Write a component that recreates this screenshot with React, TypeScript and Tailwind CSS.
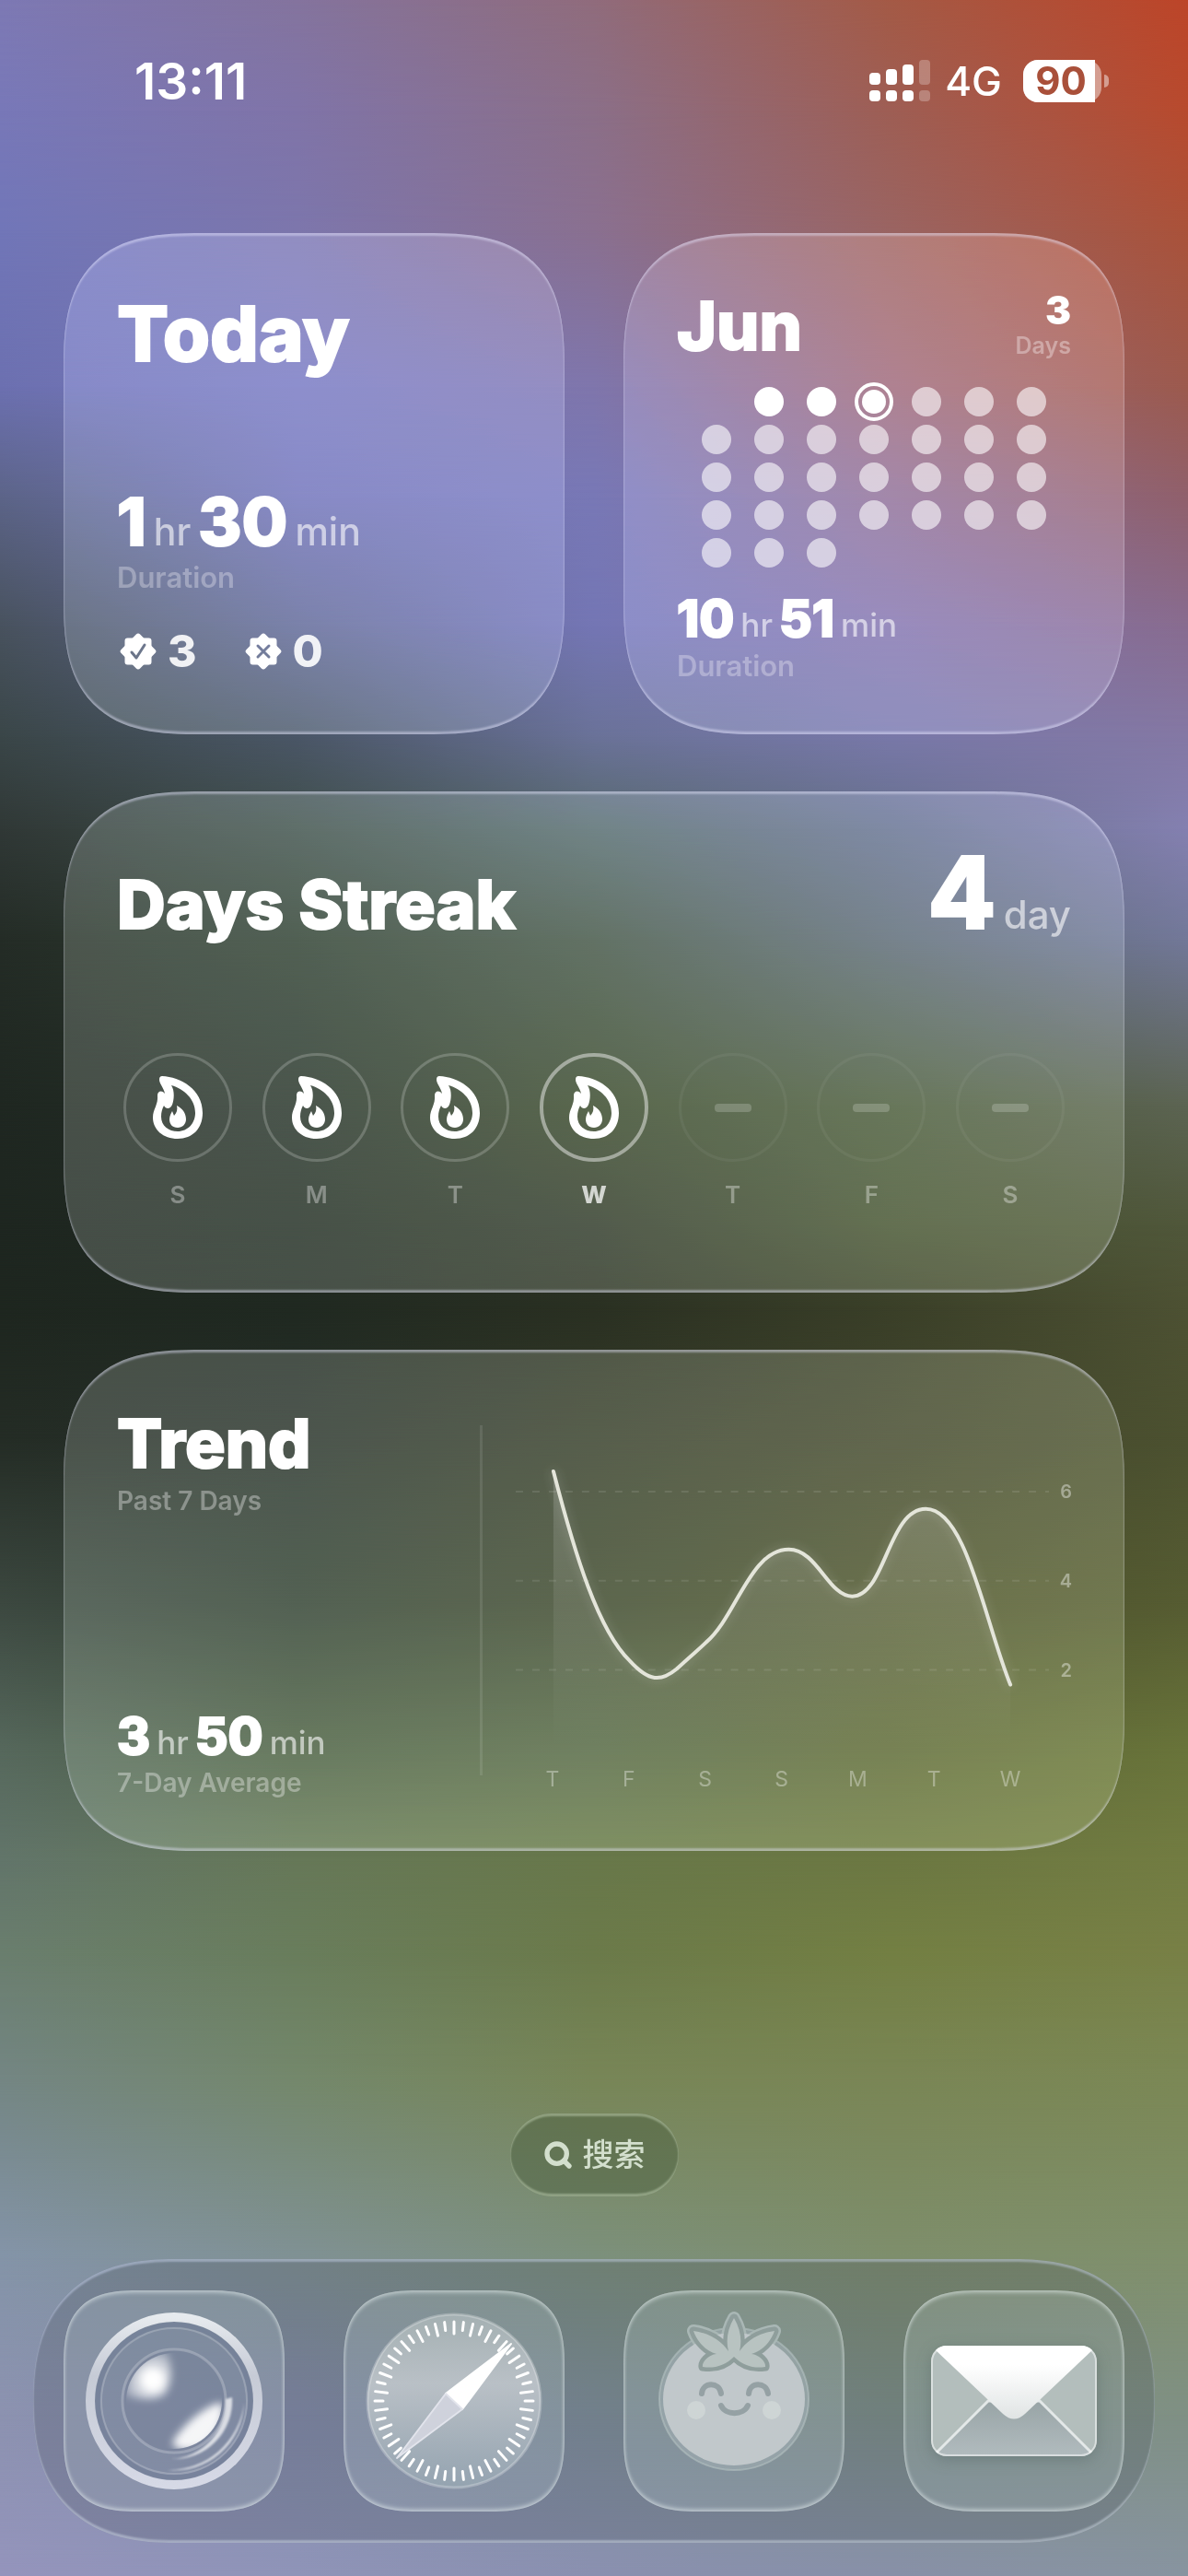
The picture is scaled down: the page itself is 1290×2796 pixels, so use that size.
import { useId, type ReactNode } from "react";
import { Search } from "lucide-react";

// Wallpaper colours: one row per height, five stops from left to right.
const wallpaper: { at: number; colors: string[] }[] = [
  { at: 0, colors: ["#7d79b4", "#84749e", "#906c7c", "#a45a46", "#bd4529"] },
  { at: 120, colors: ["#7878b8", "#8074a8", "#8b6f88", "#9e5e54", "#b84a2e"] },
  { at: 250, colors: ["#7176b8", "#7c76ac", "#8a7090", "#9a6462", "#aa523a"] },
  { at: 420, colors: ["#6c70b0", "#7778b8", "#7f76ac", "#98697a", "#9c5a4e"] },
  { at: 540, colors: ["#5c6488", "#7072b0", "#7878b6", "#8c7094", "#90606c"] },
  { at: 680, colors: ["#48525e", "#606690", "#7476b4", "#8274a8", "#886c90"] },
  { at: 800, colors: ["#3a4648", "#4a5666", "#6a7298", "#7878a8", "#8478a4"] },
  { at: 900, colors: ["#303836", "#3f4e4a", "#56686c", "#66708c", "#8480b0"] },
  { at: 1020, colors: ["#242c26", "#2e3c30", "#435246", "#5c6872", "#727898"] },
  { at: 1200, colors: ["#1f2721", "#252f27", "#38452c", "#4a583c", "#5c6452"] },
  { at: 1330, colors: ["#1e2620", "#202a21", "#2e3628", "#445032", "#50573a"] },
  { at: 1420, colors: ["#1e261f", "#202921", "#2a3022", "#3a3f28", "#4d5133"] },
  { at: 1560, colors: ["#242c25", "#262f28", "#343a28", "#40442c", "#4c5130"] },
  { at: 1740, colors: ["#3c4840", "#303d30", "#3b442c", "#4a502c", "#565c32"] },
  { at: 1900, colors: ["#56685c", "#4a5c42", "#546444", "#5c6638", "#69743a"] },
  { at: 2020, colors: ["#62756a", "#667858", "#68784a", "#6c7842", "#727c42"] },
  { at: 2120, colors: ["#6a7e6e", "#697d5c", "#6b7a4a", "#737f43", "#788046"] },
  { at: 2260, colors: ["#748684", "#74886c", "#788658", "#7a8656", "#7b8856"] },
  { at: 2450, colors: ["#8494a8", "#809194", "#7c907c", "#7e8e6c", "#80906c"] },
  { at: 2620, colors: ["#8c92b0", "#848cac", "#80909c", "#7e9088", "#7f9084"] },
  { at: 2796, colors: ["#9494bc", "#8f94b8", "#8a90b0", "#8890a8", "#8894a0"] },
];

const wallpaperHeight = 2796;

const glass =
  "bg-[#f4faf6]/19 backdrop-saturate-120 rounded-[100px] supports-[corner-shape:squircle]:rounded-[150px] [corner-shape:superellipse(1.5)] shadow-[inset_0_3px_2px_rgba(230,230,255,0.42),inset_0_-3px_2px_rgba(230,230,255,0.42),inset_0_0_2px_rgba(255,255,255,0.12)]";

const heading = "font-extrabold [-webkit-text-stroke:2px_white]";

const weekdays = [
  { label: "S", state: "done" },
  { label: "M", state: "done" },
  { label: "T", state: "done" },
  { label: "W", state: "today" },
  { label: "T", state: "next" },
  { label: "F", state: "next" },
  { label: "S", state: "next" },
];

const trendDays = ["T", "F", "S", "S", "M", "T", "W"];
const trendLevels = [6, 4, 2];

const trendLine =
  "M41 50 C65 143 90 223 124 256 C145 279 158 279 175 265 C190 251 200 243 207 236 C240 208 255 135 297 135 C328 135 340 186 366 186 C402 186 405 91 446 91 C490 91 510 213 538 282";

function Wallpaper() {
  return (
    <div aria-hidden className="absolute inset-0 -z-10 overflow-hidden">
      {wallpaper.map((row, i) => {
        const from = i === 0 ? 0 : (wallpaper[i - 1].at / wallpaperHeight) * 100;
        const to = (row.at / wallpaperHeight) * 100;
        const mask = i === 0 ? undefined : `linear-gradient(to bottom, transparent ${from}%, black ${to}%)`;
        return (
          <div
            key={row.at}
            className="absolute inset-0"
            style={{ backgroundImage: `linear-gradient(to right, ${row.colors.join(", ")})`, maskImage: mask }}
          />
        );
      })}
    </div>
  );
}

function StatusBar() {
  const bars = [13, 17, 22, 27];
  return (
    <header className="flex h-[152px] items-center justify-between pt-6 pr-[86px] pl-[146px]">
      <time className="text-[55px] leading-none font-semibold">13:11</time>
      <div className="flex items-center gap-[23px]">
        <div className="flex items-center gap-4">
          <svg viewBox="0 0 66 46" className="h-[46px] w-[66px]" fill="white" aria-label="Signal">
            {bars.map((h, i) => (
              <g key={h} opacity={i === 3 ? 0.25 : 1}>
                <rect x={i * 18} y={27 - h} width="12" height={h} rx="4" />
                <rect x={i * 18} y="33" width="12" height="12" rx="4" />
              </g>
            ))}
          </svg>
          <span className="text-[44px] leading-[56px] font-medium">4G</span>
        </div>
        <div className="flex items-center gap-[3px]">
          <div className="flex w-[85px] rounded-2xl bg-white/45">
            <div className="w-[78px] rounded-l-2xl bg-white pl-1 text-center text-[42px] leading-[46px] font-bold text-[#a9503a]">
              90
            </div>
          </div>
          <div className="h-[14px] w-[5px] rounded-r-full bg-white/45" />
        </div>
      </div>
    </header>
  );
}

function Duration({ hours, minutes, large = false }: { hours: number; minutes: number; large?: boolean }) {
  const value = large
    ? "text-[72px] leading-[72px] font-extrabold [-webkit-text-stroke:2px_white]"
    : "text-[55px] leading-[54px] font-extrabold [-webkit-text-stroke:2px_white]";
  const unit = large ? "text-[41px] font-medium text-white/60" : "text-[35px] font-medium text-white/60";
  return (
    <p className={large ? "flex items-baseline gap-2" : "flex items-baseline gap-[7px]"}>
      <span className={value}>{hours}</span>
      <span className={unit}>hr</span>
      <span className={value}>{minutes}</span>
      <span className={unit}>min</span>
    </p>
  );
}

function Badge({ children }: { children: ReactNode }) {
  const id = useId();
  return (
    <svg viewBox="0 0 40 40" className="size-10">
      <mask id={id}>
        <g fill="white" stroke="white" strokeWidth="6" strokeLinejoin="round">
          <rect x="8.500" y="8.500" width="23" height="23" />
          <rect x="8.500" y="8.500" width="23" height="23" transform="rotate(45 20 20)" />
        </g>
        <g fill="none" stroke="black" strokeWidth="3" strokeLinecap="round" strokeLinejoin="round">
          {children}
        </g>
      </mask>
      <rect width="40" height="40" fill="white" mask={`url(#${id})`} />
    </svg>
  );
}

function TodayCard() {
  return (
    <section className={`${glass} flex aspect-square flex-col px-[58px] pt-[68px] pb-[66px]`}>
      <h2 className={`${heading} text-[83px] leading-[82px]`}>Today</h2>
      <div className="mt-auto">
        <Duration hours={1} minutes={30} large />
        <p className="mt-[3px] text-[31px] leading-8 font-semibold text-white/30">Duration</p>
        <div className="mt-10 flex items-center gap-[52px] pl-[3px] text-[48px] leading-[48px] font-extrabold text-white/90">
          <span className="flex items-center gap-3">
            <Badge>
              <path d="M13 21l5 6 9-14" />
            </Badge>
            3
          </span>
          <span className="flex items-center gap-3">
            <Badge>
              <path d="M14 14l12 12M26 14l-12 12" />
            </Badge>
            0
          </span>
        </div>
      </div>
    </section>
  );
}

function MonthCard() {
  const days = Array.from({ length: 30 }, (_, i) => i + 1);
  return (
    <section className={`${glass} flex aspect-square flex-col px-[58px] pt-16 pb-[58px]`}>
      <div className="flex items-start justify-between">
        <h2 className={`${heading} text-[73px] leading-[74px]`}>Jun</h2>
        <div className="text-right">
          <p className="text-[42px] leading-10 font-black">3</p>
          <p className="text-[25px] leading-9 font-semibold text-white/35">Days</p>
        </div>
      </div>
      <div className="mx-auto mt-[26px] grid grid-cols-7 gap-x-6 gap-y-2">
        {days.map((day) => (
          <span
            key={day}
            className={
              day === 1
                ? "col-start-2 flex size-[33px] items-center justify-center"
                : "flex size-[33px] items-center justify-center"
            }
          >
            {day === 3 ? (
              <span className="-m-1 flex size-[42px] shrink-0 items-center justify-center rounded-full border-4 border-white">
                <span className="size-[26px] rounded-full bg-white" />
              </span>
            ) : (
              <span className={day < 3 ? "size-8 rounded-full bg-white" : "size-8 rounded-full bg-white/60"} />
            )}
          </span>
        ))}
      </div>
      <div className="mt-auto">
        <Duration hours={10} minutes={51} />
        <p className="mt-[3px] text-[31px] leading-8 font-semibold text-white/30">Duration</p>
      </div>
    </section>
  );
}

function Flame() {
  return (
    <svg viewBox="0 0 54 68" className="h-[68px] w-[54px]" fill="white">
      <path
        fillRule="evenodd"
        d="M10 0 C30 1 54 14 54 40 C54 57 43 68 27 68 C11 68 0 58 0 45 C0 36 6 31 5 21 C5 16 10 15 13 19 C12 13 7 8 7 4 C7 1 8 0 10 0 Z M20 10 C24 16 23 26 21 31 C19 36 14 36 12 32 C10 36 9 39 9 44 C9 54 17 60 27 60 C38 60 46 51 46 40 C46 25 34 14 20 10 Z"
      />
      <path d="M26 32 C32 35 36 40 36 47 C36 52 32 56 27 56 C21 56 18 52 18 47 C18 43 20 40 21 38 L23 43 C26 40 27 36 26 32 Z" />
    </svg>
  );
}

function StreakCard() {
  return (
    <section className={`${glass} flex aspect-[1152/544] flex-col px-[58px] pt-14`}>
      <div className="flex items-baseline justify-between">
        <h2 className={`${heading} text-[73px] leading-[108px]`}>Days Streak</h2>
        <p className="flex items-baseline gap-2">
          <span className={`${heading} text-[108px] leading-[108px]`}>4</span>
          <span className="text-[42px] font-medium text-white/60">day</span>
        </p>
      </div>
      <ol className="mx-[7px] mt-[107px] flex justify-between">
        {weekdays.map((day, i) => (
          <li key={i} className="flex flex-col items-center gap-5">
            <span
              className={
                day.state === "today"
                  ? "flex size-[118px] items-center justify-center rounded-full border-4 border-white/45"
                  : day.state === "done"
                    ? "flex size-[118px] items-center justify-center rounded-full border-3 border-white/20"
                    : "flex size-[118px] items-center justify-center rounded-full border-3 border-white/5"
              }
            >
              {day.state === "next" ? <span className="h-[9px] w-10 rounded-sm bg-white/20" /> : <Flame />}
            </span>
            <span
              className={
                day.state === "today"
                  ? "text-[26px] leading-8 font-extrabold text-white/75"
                  : "text-[26px] leading-8 font-semibold text-white/35"
              }
            >
              {day.label}
            </span>
          </li>
        ))}
      </ol>
    </section>
  );
}

function TrendChart() {
  const id = useId();
  return (
    <div className="flex-1 pt-4 pl-9">
      <svg viewBox="0 0 604 400" className="w-full overflow-visible" role="img" aria-label="Hours per day, past 7 days">
        <defs>
          <linearGradient id={id} x1="0" x2="0" y1="0" y2="1">
            <stop offset="0" stopColor="white" stopOpacity="0.16" />
            <stop offset="1" stopColor="white" stopOpacity="0" />
          </linearGradient>
        </defs>
        {trendLevels.map((level, i) => (
          <g key={level}>
            <path d={`M0 ${72 + i * 97}H580`} stroke="white" strokeOpacity="0.1" strokeWidth="2" strokeDasharray="8 10" />
            <text x="605" y={79 + i * 97} textAnchor="end" fill="white" fillOpacity="0.4" fontSize="20" fontWeight="600">
              {level}
            </text>
          </g>
        ))}
        <path d={`${trendLine} V350 H41 Z`} fill={`url(#${id})`} />
        <path
          d={trendLine}
          fill="none"
          stroke="#e4e5da"
          strokeWidth="4"
          strokeLinecap="round"
          className="drop-shadow-[0_0_6px_rgba(255,255,255,0.25)]"
        />
        {trendDays.map((day, i) => (
          <text key={i} x={40 + i * 83} y="393" textAnchor="middle" fill="white" fillOpacity="0.35" fontSize="23">
            {day}
          </text>
        ))}
      </svg>
    </div>
  );
}

function TrendCard() {
  return (
    <section className={`${glass} flex aspect-[1152/544] px-[58px] pt-[66px] pb-[58px]`}>
      <div className="flex w-[394px] flex-col">
        <h2 className={`${heading} text-[73px] leading-[72px]`}>Trend</h2>
        <p className="mt-2 text-[28px] leading-9 font-semibold text-white/35">Past 7 Days</p>
        <div className="mt-auto">
          <Duration hours={3} minutes={50} />
          <p className="mt-[2px] text-[28px] leading-8 font-semibold text-white/35">7-Day Average</p>
        </div>
      </div>
      <div className="mt-4 mb-6 w-[3px] bg-white/10" />
      <TrendChart />
    </section>
  );
}

function CameraIcon() {
  const id = useId();
  return (
    <svg viewBox="0 0 240 240" className="w-full" aria-label="Camera">
      <defs>
        <radialGradient id={`${id}a`} cx="0.6" cy="0.6" r="0.6">
          <stop offset="0.2" stopColor="white" />
          <stop offset="1" stopColor="white" stopOpacity="0.3" />
        </radialGradient>
        <linearGradient id={`${id}r`} x1="0" x2="0" y1="0" y2="1">
          <stop offset="0" stopColor="#e6eaee" />
          <stop offset="0.35" stopColor="#c6cbd6" />
          <stop offset="1" stopColor="#d6d9e6" />
        </linearGradient>
        <clipPath id={`${id}c`}>
          <circle cx="120" cy="120" r="52" />
        </clipPath>
        <filter id={`${id}b`} x="-30%" y="-30%" width="160%" height="160%">
          <feGaussianBlur stdDeviation="4" />
        </filter>
        <filter id={`${id}s`}>
          <feGaussianBlur stdDeviation="1" />
        </filter>
      </defs>
      <circle cx="120" cy="120" r="86" fill="#76829c" fillOpacity="0.4" />
      <circle cx="120" cy="120" r="83" fill="none" stroke="#6a7690" strokeOpacity="0.4" strokeWidth="5" />
      <circle cx="120" cy="120" r="79" fill="none" stroke="white" strokeOpacity="0.2" strokeWidth="2" />
      <circle cx="120" cy="120" r="91" fill="none" stroke={`url(#${id}r)`} strokeWidth="10" />
      <circle cx="120" cy="120" r="56" fill="#6f7c94" fillOpacity="0.3" stroke="white" strokeOpacity="0.22" strokeWidth="3" />
      <g clipPath={`url(#${id}c)`}>
        <path
          d="M66 114 C66 88 88 66 112 66 C119 82 119 100 110 113 C98 121 80 118 66 114 Z"
          fill={`url(#${id}a)`}
          filter={`url(#${id}b)`}
        />
        <path
          d="M172 122 C158 122 128 146 118 166 C124 176 144 176 158 166 C170 154 176 136 172 122 Z"
          fill="white"
          fillOpacity="0.92"
          filter={`url(#${id}b)`}
        />
      </g>
      <circle cx="97" cy="97" r="9" fill="white" filter={`url(#${id}b)`} />
      <path d="M183 116 A63 63 0 0 1 117 183 A62 62 0 0 0 176 118 Z" fill="white" fillOpacity="0.7" filter={`url(#${id}s)`} />
      <path d="M196 122 A76 76 0 0 1 112 195 A82 82 0 0 0 196 122 Z" fill="white" fillOpacity="0.75" filter={`url(#${id}s)`} />
    </svg>
  );
}

function CompassIcon() {
  const id = useId();
  const ticks = Array.from({ length: 52 }, (_, i) => i);
  return (
    <svg viewBox="0 0 240 240" className="w-full" aria-label="Browser">
      <defs>
        <linearGradient id={id} x1="0" x2="0" y1="0" y2="1">
          <stop offset="0" stopColor="#a4b0b2" />
          <stop offset="0.4" stopColor="#b9c0c6" />
          <stop offset="1" stopColor="#94a3b0" />
        </linearGradient>
      </defs>
      <circle cx="120" cy="120" r="94" fill={`url(#${id})`} stroke="white" strokeOpacity="0.25" strokeWidth="3" />
      <g stroke="white" strokeWidth="3" strokeLinecap="round">
        {ticks.map((i) => (
          <path key={i} d={i % 2 ? "M120 34v9" : "M120 34v13"} transform={`rotate(${(i * 360) / 52} 120 120)`} />
        ))}
      </g>
      <path d="M182 58 L129 129 L111 112 Z" fill="white" stroke="white" strokeWidth="2" strokeLinejoin="round" />
      <path d="M58 182 L111 112 L129 129 Z" fill="#cfd2dc" stroke="#e2e4ec" strokeWidth="2" strokeLinejoin="round" />
    </svg>
  );
}

function TomatoIcon() {
  const leaf =
    "M120 30 C127 42 129 54 126 66 C134 54 148 46 164 44 C160 56 150 66 139 69 C148 70 155 78 154 83 C142 85 130 82 120 72 C110 82 98 85 86 83 C85 78 92 70 101 69 C90 66 80 56 76 44 C92 46 106 54 114 66 C111 54 113 42 120 30 Z";
  return (
    <svg viewBox="0 0 240 240" className="w-full" aria-label="Focus timer">
      <ellipse cx="120" cy="118" rx="81" ry="77" fill="#a0aeb2" fillOpacity="0.6" stroke="#b4c1c2" strokeOpacity="0.6" strokeWidth="2" />
      <path d={leaf} fill="#8a9a98" stroke="#a9b7b5" strokeWidth="14" strokeLinejoin="round" />
      <ellipse cx="120" cy="118" rx="77" ry="72" fill="#c1c8cb" />
      <path d={leaf} fill="#b8c3c1" stroke="#8f9e9c" strokeWidth="9" strokeLinejoin="round" />
      <path d={leaf} fill="#b8c3c1" />
      <g fill="none" stroke="#95a1a4" strokeWidth="6" strokeLinecap="round">
        <path d="M85 112 C86 99 104 99 106 112" />
        <path d="M136 112 C137 99 155 99 157 112" />
        <path d="M106 125 C111 136 130 136 135 125" />
      </g>
      <circle cx="79" cy="130" r="10" fill="#ced5d5" />
      <circle cx="161" cy="130" r="10" fill="#ced5d5" />
    </svg>
  );
}

function MailIcon() {
  const id = useId();
  return (
    <svg viewBox="0 0 240 240" className="w-full" aria-label="Mail">
      <defs>
        <linearGradient id={`${id}b`} x1="0" x2="0" y1="0" y2="1">
          <stop offset="0.3" stopColor="white" />
          <stop offset="1" stopColor="#e0e4e4" />
        </linearGradient>
        <linearGradient id={`${id}c`} x1="0" x2="0" y1="0" y2="1">
          <stop offset="0" stopColor="#98a4a6" />
          <stop offset="1" stopColor="#b3bdc0" />
        </linearGradient>
        <clipPath id={`${id}d`}>
          <rect x="30" y="60" width="180" height="120" rx="17" />
        </clipPath>
      </defs>
      <g className="drop-shadow-[0_4px_8px_rgba(60,80,80,0.3)]">
        <g clipPath={`url(#${id}d)`}>
          <rect x="30" y="60" width="180" height="120" fill="#b3bebc" />
          <path d="M36 176 L92 120 H148 L204 176 L200 184 H40 Z" fill={`url(#${id}c)`} stroke="#e3e8e8" strokeWidth="3" />
          <path d="M34 64 L108 134 Q120 145 132 134 L206 64 L200 56 H40 Z" fill={`url(#${id}b)`} />
        </g>
      </g>
      <rect x="31" y="61" width="178" height="118" rx="16" fill="none" stroke="white" strokeOpacity="0.5" strokeWidth="2" />
    </svg>
  );
}

function Dock() {
  const apps = [
    { name: "Camera", icon: <CameraIcon /> },
    { name: "Browser", icon: <CompassIcon /> },
    { name: "Focus timer", icon: <TomatoIcon /> },
    { name: "Mail", icon: <MailIcon /> },
  ];
  return (
    <nav className="mx-9 mb-9 flex justify-between rounded-[130px] bg-[#46505c]/25 px-[33px] py-[34px] shadow-[inset_0_3px_2px_rgba(215,225,255,0.4),inset_0_-3px_2px_rgba(225,235,245,0.4)] [corner-shape:superellipse(1.3)] supports-[corner-shape:squircle]:rounded-[154px]">
      {apps.map((app) => (
        <button
          key={app.name}
          aria-label={app.name}
          className="size-60 rounded-[56px] bg-[#e8fcff]/15 shadow-[inset_0_3px_4px_rgba(235,245,245,0.4),inset_0_-3px_4px_rgba(235,245,245,0.4),inset_0_0_4px_rgba(255,255,255,0.3)] [corner-shape:superellipse(1.5)] supports-[corner-shape:squircle]:rounded-[84px]"
        >
          {app.icon}
        </button>
      ))}
    </nav>
  );
}

export default function App() {
  return (
    <div className="relative isolate flex min-h-screen flex-col font-['Inter','Noto_Sans_CJK_SC',sans-serif] text-white">
      <Wallpaper />
      <StatusBar />
      <main className="flex flex-col gap-[62px] px-[69px] pt-[101px]">
        <div className="grid grid-cols-2 gap-16">
          <TodayCard />
          <MonthCard />
        </div>
        <StreakCard />
        <TrendCard />
      </main>
      <div className="mt-auto mb-[68px] flex justify-center pt-20">
        <button className="flex h-[90px] items-center gap-[11px] rounded-full bg-[#465a3c]/45 px-9 text-[34px] leading-none font-medium text-[#d3dfcd] shadow-[inset_0_3px_2px_rgba(215,230,200,0.4),inset_0_-3px_2px_rgba(215,230,200,0.4)]">
          <Search className="size-8" strokeWidth={4} />
          搜索
        </button>
      </div>
      <Dock />
    </div>
  );
}
